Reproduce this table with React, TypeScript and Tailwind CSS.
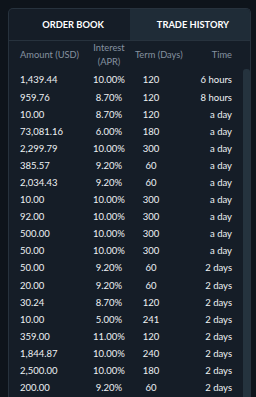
const rows: [string, string, string, string][] = [
  ["1,439.44", "10.00%", "120", "6 hours"],
  ["959.76", "8.70%", "120", "8 hours"],
  ["10.00", "8.70%", "120", "a day"],
  ["73,081.16", "6.00%", "180", "a day"],
  ["2,299.79", "10.00%", "300", "a day"],
  ["385.57", "9.20%", "60", "a day"],
  ["2,034.43", "9.20%", "60", "a day"],
  ["10.00", "10.00%", "300", "a day"],
  ["92.00", "10.00%", "300", "a day"],
  ["500.00", "10.00%", "300", "a day"],
  ["50.00", "10.00%", "300", "a day"],
  ["50.00", "9.20%", "60", "2 days"],
  ["20.00", "9.20%", "60", "2 days"],
  ["30.24", "8.70%", "120", "2 days"],
  ["10.00", "5.00%", "241", "2 days"],
  ["359.00", "11.00%", "120", "2 days"],
  ["1,844.87", "10.00%", "240", "2 days"],
  ["2,500.00", "10.00%", "180", "2 days"],
  ["200.00", "9.20%", "60", "2 days"],
];

export default function App() {
  return (
    <div
      className="h-[397px] w-[256px] overflow-hidden bg-[#0e141b] pl-[8px] pt-[8px]"
      style={{ fontFamily: "Lato, 'Open Sans', sans-serif" }}
    >
      <div className="h-[400px] w-[243px] overflow-hidden rounded-t-[5px] border border-b-0 border-[#27323d] bg-[#151d27]">
        {/* tabs */}
        <div className="flex h-[32px] border-b border-[#27323d] text-[9.3px] font-bold text-white">
          <div className="flex w-[121px] items-center justify-center pl-[7px]">ORDER BOOK</div>
          <div className="flex flex-1 items-center justify-center bg-[#1f2c37] pl-[6px]">TRADE HISTORY</div>
        </div>

        {/* header */}
        <div className="flex h-[28px] items-center whitespace-nowrap text-[9.3px] leading-[14px] text-[#8592a0]">
          <div className="w-[74px] pl-[11px]">Amount (USD)</div>
          <div className="w-[52px] text-center">
            Interest
            <br />
            (APR)
          </div>
          <div className="w-[48px]">Term (Days)</div>
          <div className="w-[49px] text-right">Time</div>
        </div>

        <div className="flex">
          <div className="w-[233px] pt-[3px] text-[9.5px] text-[#eef1f4]">
            {rows.map((r, i) => (
              <div key={i} className="flex h-[17.1px] items-center">
                <div className="w-[71px] pl-[11px]">{r[0]}</div>
                <div className="w-[58px] text-center">{r[1]}</div>
                <div className="w-[26px] text-center">{r[2]}</div>
                <div className="w-[68px] text-right">{r[3]}</div>
              </div>
            ))}
          </div>
          <div className="ml-[1px] h-[340px] w-[7px] rounded-t-[3px] bg-[#25333e]" />
        </div>
      </div>
    </div>
  );
}
